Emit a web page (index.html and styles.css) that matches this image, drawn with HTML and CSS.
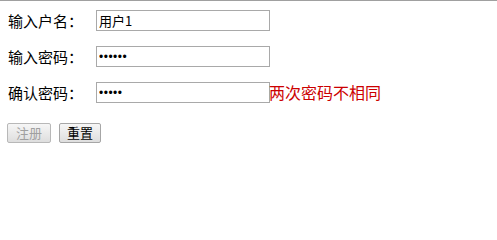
FILE: index.html
```html
<!DOCTYPE html>
<html lang="zh">
<head>
<meta charset="utf-8">
<title>注册</title>
<link rel="stylesheet" href="styles.css">
</head>
<body>
<div class="page">
  <form class="form">
    <div class="row">
      <label class="label">输入户名：</label>
      <input class="field" type="text" value="用户1">
    </div>
    <div class="row">
      <label class="label">输入密码：</label>
      <input class="field pw" type="password" value="123456">
    </div>
    <div class="row">
      <label class="label">确认密码：</label>
      <input class="field pw" type="password" value="12345">
      <span class="error">两次密码不相同</span>
    </div>
    <div class="actions">
      <button class="btn btn-submit" type="button" disabled>注册</button>
      <button class="btn" type="reset">重置</button>
    </div>
  </form>
</div>
</body>
</html>
```

FILE: styles.css
```css
html, body {
  margin: 0;
  padding: 0;
  background: #fff;
}
.page {
  border-top: 1px solid #a0a0a0;
  font-family: "Noto Sans CJK SC", "Noto Sans", sans-serif;
  color: #000;
}
.form {
  margin: 0;
  padding: 9px 8px 0 8px;
}
.row {
  display: flex;
  align-items: center;
  height: 21px;
  margin-bottom: 15px;
}
.label {
  width: 88px;
  font-size: 15px;
  line-height: 21px;
}
.field {
  box-sizing: border-box;
  width: 174px;
  height: 21px;
  margin: 0;
  padding: 1px 2px;
  border: 1px solid #a9a9a9;
  font-family: "Noto Sans CJK SC", "Noto Sans", sans-serif;
  font-size: 13px;
  color: #000;
  outline: none;
}
.field.pw {
  font-family: "Liberation Sans", Arial, sans-serif;
  font-size: 12px;
  letter-spacing: 0.5px;
}
.error {
  color: #cc0000;
  font-size: 16px;
  line-height: 21px;
  margin-left: -1px;
}
.actions {
  display: flex;
  gap: 8px;
  padding-top: 5px;
  margin-left: -1px;
}
.btn {
  box-sizing: border-box;
  height: 20px;
  padding: 0 7px;
  border: 1px solid #a6a6a6;
  border-radius: 2px;
  background: linear-gradient(#f6f6f6, #dedede);
  font-family: "Noto Sans CJK SC", "Noto Sans", sans-serif;
  font-size: 13px;
  line-height: 18px;
  color: #000;
}
.btn-submit {
  padding: 0 8px;
}
.btn:disabled {
  color: #a0a0a0;
  border-color: #b8b8b8;
}
```
